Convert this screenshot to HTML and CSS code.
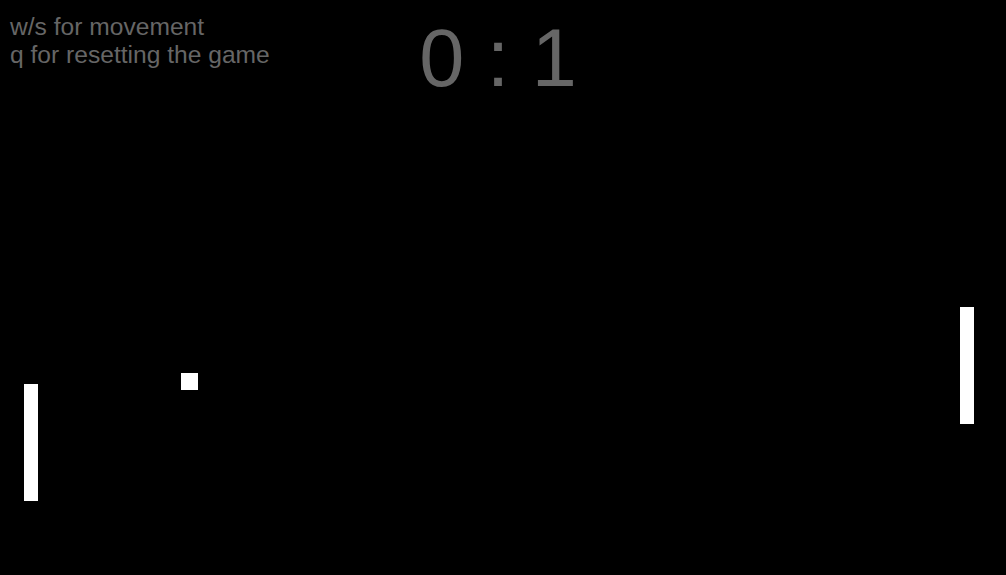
FILE: index.html
```html
<!DOCTYPE html>
<html lang="en">
<head>
<meta charset="utf-8">
<title>Pong</title>
<link rel="stylesheet" href="styles.css">
</head>
<body>
<main class="game">
  <header class="hud">
    <div class="help">
      <div>w/s for movement</div>
      <div>q for resetting the game</div>
    </div>
    <div class="score">0 : 1</div>
    <div></div>
  </header>
  <div class="paddle paddle-left"></div>
  <div class="paddle paddle-right"></div>
  <div class="ball"></div>
</main>
</body>
</html>
```

FILE: styles.css
```css
html, body {
  margin: 0;
  padding: 0;
  background: #000;
}

body {
  width: 1006px;
  height: 575px;
  overflow: hidden;
  font-family: "Liberation Sans", Arial, sans-serif;
  color: #666;
}

.game {
  position: relative;
  width: 1006px;
  height: 575px;
  background: #000;
}

.hud {
  display: grid;
  grid-template-columns: 1fr auto 1fr;
  align-items: start;
  padding-top: 13px;
}

.help {
  padding-left: 10px;
  font-size: 24.6px;
  line-height: 27.6px;
  white-space: nowrap;
}

.score {
  margin-top: -1px;
  margin-right: 9.8px;
  font-size: 81px;
  line-height: normal;
  white-space: pre;
}

.paddle,
.ball {
  position: absolute;
  background: #fff;
}

.paddle {
  width: 14.5px;
  height: 117px;
}

.paddle-left {
  left: 23.5px;
  top: 383.5px;
}

.paddle-right {
  left: 959.5px;
  top: 306.5px;
}

.ball {
  left: 180.5px;
  top: 373px;
  width: 17.5px;
  height: 17px;
}
```
